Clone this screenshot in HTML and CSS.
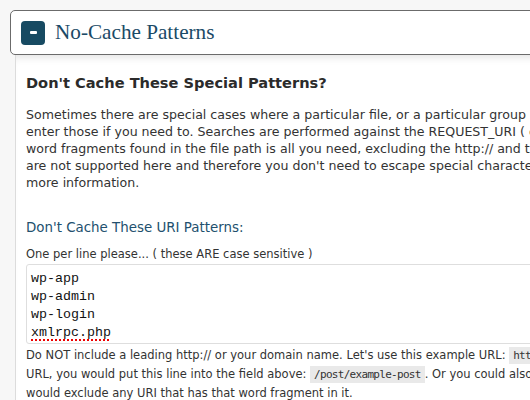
FILE: index.html
```html
<!DOCTYPE html>
<html>
<head>
<meta charset="utf-8">
<link rel="stylesheet" href="styles.css">
</head>
<body>
<div class="page">
  <div class="box-head">
    <span class="toggle"><span class="minus"></span></span>
    <span class="title">No-Cache Patterns</span>
  </div>
  <div class="panel">
    <h3 class="sec-title">Don't Cache These Special Patterns?</h3>
    <p class="intro">Sometimes there are special cases where a particular file, or a particular group of files you don't want to cache. You can<br>enter those if you need to. Searches are performed against the REQUEST_URI ( case sensitive ). So whole words, or<br>word fragments found in the file path is all you need, excluding the http:// and the domain name. Regular expressions<br>are not supported here and therefore you don't need to escape special characters. Please see the FAQ for<br>more information.</p>
    <h4 class="label">Don't Cache These URI Patterns:</h4>
    <p class="hint">One per line please... ( these ARE case sensitive )</p>
    <div class="textarea"><div>wp-app</div><div>wp-admin</div><div>wp-login</div><div><span class="spell">xmlrpc.php</span></div></div>
    <p class="note">Do NOT include a leading http:// or your domain name. Let's use this example URL: <code>http://www.example.com/post/example-post</code>. To exclude this<br>URL, you would put this line into the field above: <code>/post/example-post</code>. Or you could also just put in a word fragment like <code>example</code>, which<br>would exclude any URI that has that word fragment in it.</p>
  </div>
</div>
</body>
</html>
```
FILE: styles.css
```css
html, body {
  margin: 0;
  padding: 0;
  background: #f7f7f7;
  width: 530px;
  height: 400px;
  overflow: hidden;
}
.page {
  padding: 10px 0 0 10px;
  width: 900px;
}
.box-head {
  position: relative;
  z-index: 2;
  display: flex;
  align-items: center;
  height: 43px;
  border: 1px solid #6b6b6b;
  border-radius: 5px;
  background: #fff;
  padding-left: 10px;
}
.toggle {
  display: flex;
  align-items: center;
  justify-content: center;
  width: 24px;
  height: 24px;
  border-radius: 4px;
  background: #174a62;
}
.minus {
  display: block;
  width: 7px;
  height: 3px;
  background: #fff;
  border-radius: 1px;
}
.title {
  margin-left: 10px;
  font-family: "Liberation Serif", Georgia, serif;
  font-size: 21.2px;
  color: #1a4a66;
}
.panel {
  margin-left: 5px;
  background: #fff;
  border-left: 1px solid #dcdcdc;
  padding: 1px 0 0 10px;
  box-shadow: inset 0 8px 8px -6px rgba(0,0,0,0.12);
  height: 400px;
  font-family: "DejaVu Sans", Verdana, sans-serif;
  color: #333;
  white-space: nowrap;
}
.sec-title {
  margin: 17px 0 0 0;
  font-size: 14.6px;
  font-weight: bold;
  color: #2b2b2b;
  line-height: 20px;
}
.intro {
  margin: 13px 0 0 0;
  font-size: 12.6px;
  line-height: 17px;
}
.label {
  margin: 27px 0 0 0;
  font-weight: normal;
  font-size: 13.4px;
  line-height: 20px;
  color: #22506e;
}
.hint {
  margin: 8px 0 0 0;
  font-size: 11.5px;
  line-height: 16px;
}
.textarea {
  margin-top: 2px;
  width: 600px;
  border: 1px solid #dedede;
  border-radius: 3px;
  padding: 5px 4px 3px 4px;
  height: 70px;
  font-family: "Liberation Mono", "Courier New", monospace;
  font-size: 13.33px;
  line-height: 18px;
  color: #111;
}
.spell {
  text-decoration: underline dotted #e00;
  text-decoration-thickness: 2px;
  text-underline-offset: 3px;
}
.note {
  margin: 2px 0 0 0;
  font-size: 11.5px;
  line-height: 19px;
}
code {
  font-family: "DejaVu Sans Mono", Consolas, monospace;
  font-size: 11px;
  letter-spacing: -0.7px;
  background: #e9e9e9;
  padding: 2px 4px;
  color: #333;
}
```
